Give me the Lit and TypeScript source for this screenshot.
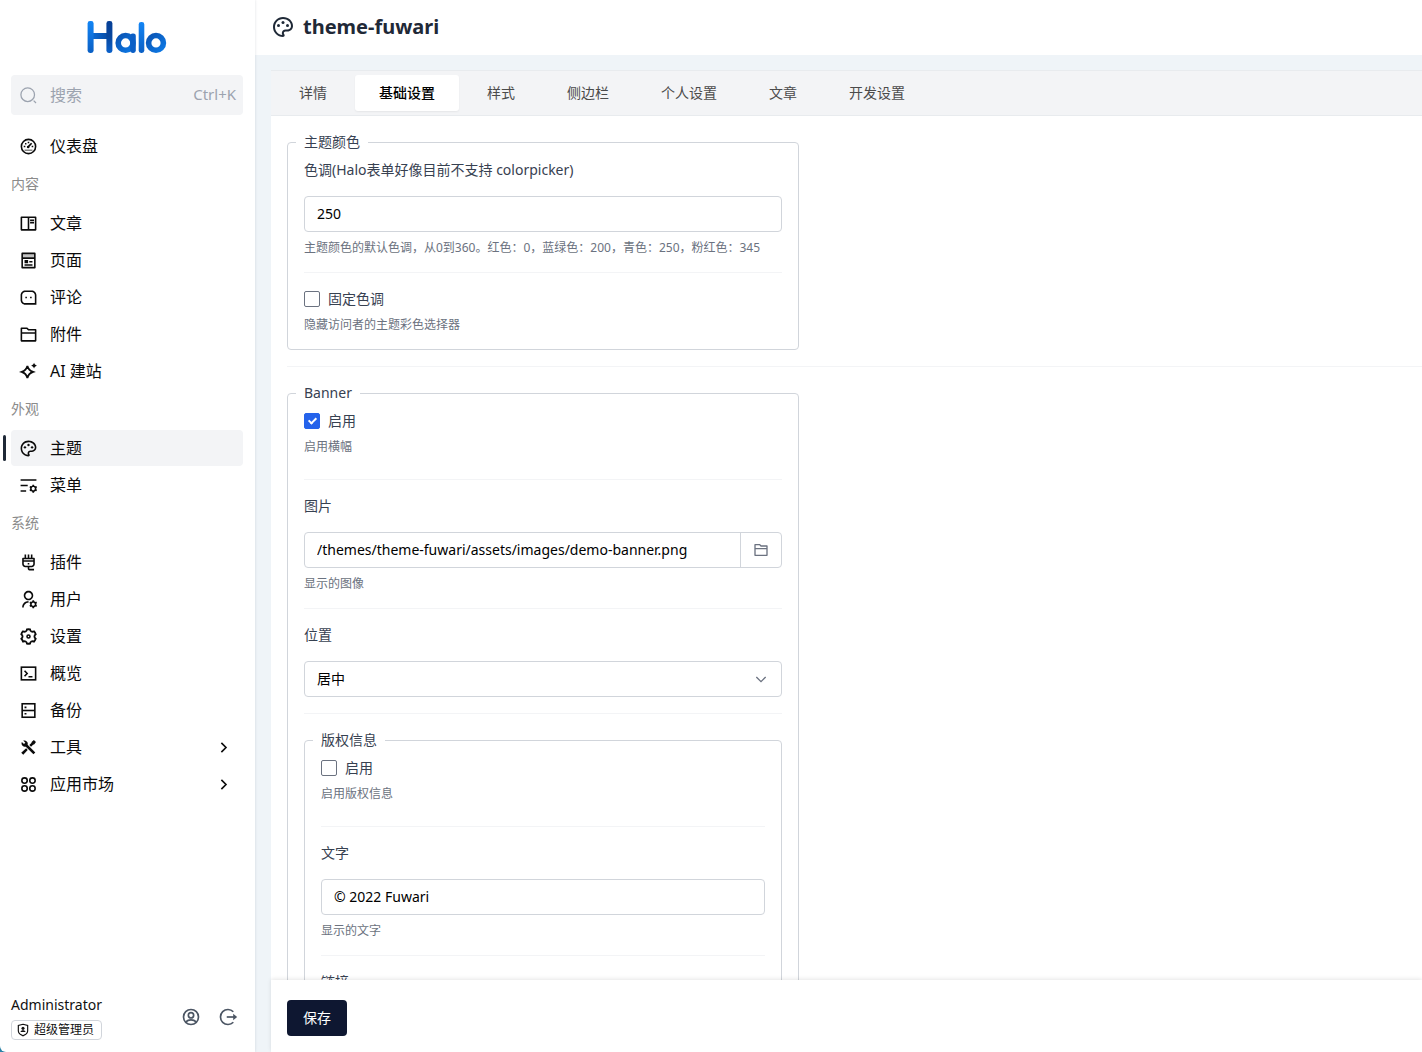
import { LitElement, html, css, svg, nothing } from "lit";
import { customElement, property } from "lit/decorators.js";
import { classMap } from "lit/directives/class-map.js";

const GEAR_SMALL =
  "M20.674 13.0251L21.8301 12.634L22.8301 14.366L21.914 15.1711C21.9704 15.4386 22 15.7158 22 16C22 16.2842 21.9704 16.5614 21.914 16.8289L22.8301 17.634L21.8301 19.366L20.674 18.9749C20.2635 19.3441 19.7763 19.6295 19.2391 19.8044L19 21H17L16.7609 19.8044C16.2237 19.6295 15.7365 19.3441 15.326 18.9749L14.1699 19.366L13.1699 17.634L14.086 16.8289C14.0296 16.5614 14 16.2842 14 16C14 15.7158 14.0296 15.4386 14.086 15.1711L13.1699 14.366L14.1699 12.634L15.326 13.0251C15.7365 12.6559 16.2237 12.3705 16.7609 12.1956L17 11H19L19.2391 12.1956C19.7763 12.3705 20.2635 12.6559 20.674 13.0251ZM18 18C19.1046 18 20 17.1046 20 16C20 14.8954 19.1046 14 18 14C16.8954 14 16 14.8954 16 16C16 17.1046 16.8954 18 18 18Z";

const ICONS: Record<string, unknown> = {
  search: svg`<circle cx="11" cy="11" r="8.6" class="line thin"/><path d="M18.5 18.5L21.5 21.5" class="line thin"/>`,
  dashboard: svg`<circle cx="12" cy="12" r="9" class="line"/><path d="M11.5 12.5L16 7.8" class="line"/><circle cx="11.6" cy="12.6" r="1.7"/><path d="M6 11h2v2H6zM16 11h2v2h-2zM11 6h2v2h-2zM7.6 7.6h1.8v1.8H7.6zM7 16h10v1H7z"/>`,
  posts: svg`<path d="M2 4C2 3.4 2.4 3 3 3H21C21.6 3 22 3.4 22 4V20C22 20.6 21.6 21 21 21H3C2.4 21 2 20.6 2 20V4ZM11 5H4V19H11V5ZM13 5V19H20V5H13ZM14 7H19V9H14V7ZM14 10H19V12H14V10Z"/>`,
  pages: svg`<path d="M20 22H4C3.4 22 3 21.6 3 21V3C3 2.4 3.4 2 4 2H20C20.6 2 21 2.4 21 3V21C21 21.6 20.6 22 20 22ZM19 8V4H5V8H19ZM19 10H5V20H19V10Z"/><path d="M5 4h14v4H5z" opacity=".25"/><path d="M7 11.5h4.5v4H7zM13 12.5h4v2h-4zM7 16.8h10v1.8H7z"/>`,
  comments: svg`<path d="M2 8.994C2 5.68286 4.67662 3 8 3H16C19.3137 3 22 5.68286 22 8.994V21H8C4.68629 21 2 18.3171 2 15.006V8.994ZM20 19V8.994C20 6.78543 18.2062 5 16 5H8C5.78458 5 4 6.78458 4 8.994V15.006C4 17.2146 5.79383 19 8 19H20ZM14 11H16V13H14V11ZM8 11H10V13H8V11Z"/>`,
  folder: svg`<path d="M12.4142 5H21C21.5523 5 22 5.44772 22 6V20C22 20.5523 21.5523 21 21 21H3C2.44772 21 2 20.5523 2 20V4C2 3.44772 2.44772 3 3 3H10.4142L12.4142 5ZM4 11V19H20V11H4ZM4 9H20V7H11.5858L9.58579 5H4V9Z"/>`,
  sparkle: svg`<path d="M10.6 5C11.6 9.3 13.2 11 17.8 12.6C13.2 14.2 11.6 16 10.6 20.4C9.6 16 8 14.2 3.4 12.6C8 11 9.6 9.3 10.6 5Z" class="line bold"/><path d="M19 1C19.7 3 20.4 3.8 22.6 4.6C20.4 5.4 19.7 6.2 19 8.2C18.3 6.2 17.6 5.4 15.4 4.6C17.6 3.8 18.3 3 19 1Z"/>`,
  palette: svg`<path d="M12 2C17.5222 2 22 5.97778 22 10.8889C22 13.9556 19.5111 16.4444 16.4444 16.4444H14.4778C13.5556 16.4444 12.8111 17.1889 12.8111 18.1111C12.8111 18.5333 12.9778 18.9222 13.2333 19.2111C13.5 19.5111 13.6667 19.9 13.6667 20.3333C13.6667 21.2556 12.9 22 12 22C6.47778 22 2 17.5222 2 12C2 6.47778 6.47778 2 12 2ZM10.8111 18.1111C10.8111 16.0843 12.451 14.4444 14.4778 14.4444H16.4444C18.4065 14.4444 20 12.851 20 10.8889C20 7.1392 16.4677 4 12 4C7.58235 4 4 7.58235 4 12C4 16.19 7.2226 19.6285 11.324 19.9718C10.9948 19.4168 10.8111 18.7761 10.8111 18.1111Z"/><circle cx="7.5" cy="10.5" r="1.5"/><circle cx="16.5" cy="10.5" r="1.5"/><circle cx="12" cy="7.5" r="1.5"/>`,
  menus: svg`<path d="M2 18H9V20H2V18ZM2 11H11V13H2V11ZM2 4H22V6H2V4Z"/><path d=${GEAR_SMALL}/>`,
  plug: svg`<path d="M13 18V20H19V22H13C11.8954 22 11 21.1046 11 20V18H8C5.79086 18 4 16.2091 4 14V7C4 6.44772 4.44772 6 5 6H7V2H9V6H11V2H13V6H15V2H17V6H19C19.5523 6 20 6.44772 20 7V14C20 16.2091 18.2091 18 16 18H13ZM8 16H16C17.1046 16 18 15.1046 18 14V11H6V14C6 15.1046 6.89543 16 8 16ZM18 8H6V9H18V8ZM11 12.5H13V14.5H11Z"/>`,
  user: svg`<path d="M12 14V16C8.68629 16 6 18.6863 6 22H4C4 17.5817 7.58172 14 12 14ZM12 13C8.685 13 6 10.315 6 7C6 3.685 8.685 1 12 1C15.315 1 18 3.685 18 7C18 10.315 15.315 13 12 13ZM12 11C14.21 11 16 9.21 16 7C16 4.79 14.21 3 12 3C9.79 3 8 4.79 8 7C8 9.21 9.79 11 12 11Z"/><path d=${GEAR_SMALL} transform="translate(0 2)"/>`,
  settings: svg`<path class="line bold" d="M4.3 16.6C4 16 3.1 15.5 2.9 14.9C3.9 14.2 4.5 13.2 4.5 12C4.5 10.8 3.9 9.8 2.9 9.1C3.4 7.7 4.1 6.5 5 5.6C6.1 6.1 7.3 6.2 8.4 5.6C9.5 5 10 4.1 10 3.1C11.4 2.8 12.6 2.8 14 3.1C14 4.1 14.5 5 15.6 5.6C16.7 6.2 17.9 6.1 19 5.6C19.9 6.5 20.6 7.7 21.1 9.1C20.1 9.8 19.5 10.8 19.5 12C19.5 13.2 20.1 14.2 21.1 14.9C20.6 16.3 19.9 17.5 19 18.4C17.9 17.9 16.7 17.8 15.6 18.4C14.5 19 14 19.9 14 20.9C12.6 21.2 11.4 21.2 10 20.9C10 19.9 9.5 19 8.4 18.4C7.3 17.8 6.1 17.9 5 18.4C4.7 18 4.5 17.2 4.3 16.6Z"/><circle cx="12" cy="12" r="1.9" class="line"/>`,
  terminal: svg`<rect x="3" y="4" width="18" height="16" class="line"/><path d="M7 8.5L10.3 12L7 15.5M12 16H17" class="line"/>`,
  server: svg`<rect x="4" y="3.5" width="16" height="17" class="line"/><path d="M4 12H20" class="line"/><path d="M7 7h2.4v2H7zM7 15h2.4v2H7z"/>`,
  tools: svg`<path d="M5.3 3.3L8 6L6.3 7.7L3.6 5C2.8 6.8 3.2 8.7 4.5 9.9C5.7 11.1 7.2 11.3 8.6 10.9L18.2 20.6L20.6 18.2L10.9 8.6C11.3 7.2 11.1 5.7 9.9 4.5C8.7 3.2 6.8 2.6 5.3 3.3Z"/><path d="M18.8 2.6L21.4 5.2L19.4 7.8L17.8 8.4L15.2 11L13 8.8L15.6 6.2L16.2 4.6ZM9 13L11 15L5.4 21.2L2.8 18.6Z"/>`,
  apps: svg`<circle cx="7" cy="7" r="3.4" class="line"/><circle cx="17" cy="7" r="3.4" class="line"/><circle cx="7" cy="17" r="3.4" class="line"/><circle cx="17" cy="17" r="3.4" class="line"/>`,
  right: svg`<path d="M9 5.5L15.5 12L9 18.5" class="line bold"/>`,
  down: svg`<path d="M5 9L12 16L19 9" class="line"/>`,
  account: svg`<circle cx="12" cy="12" r="9" class="line"/><circle cx="12" cy="10" r="3.2" class="line"/><path d="M5.8 17.8C9 14.6 15 14.6 18.2 17.8" class="line"/>`,
  logout: svg`<path d="M18.4 5.7A9 9 0 1 0 18.4 18.3" class="line"/><path d="M10.5 12H20" class="line"/><path d="M18.2 8.2L23 12L18.2 15.8Z"/>`,
  shield: svg`<path d="M12 2.2L20 4.2V13.5C20 16 18.8 17.8 16.8 19.1L12 22L7.2 19.1C5.2 17.8 4 16 4 13.5V4.2Z" class="line"/><circle cx="12" cy="9.2" r="2.6"/><path d="M7.6 15.6C8 13.4 9.8 12.6 12 12.6S16 13.4 16.4 15.6Z"/>`,
};

@customElement("ui-icon")
class UiIcon extends LitElement {
  @property() name = "";
  static styles = css`
    :host { display: inline-flex; flex: none; width: 20px; height: 20px; }
    svg { width: 100%; height: 100%; fill: currentColor; }
    .line { fill: none; stroke: currentColor; stroke-width: 2; }
    .thin { stroke-width: 1.6; }
    .bold { stroke-width: 2.3; }
  `;
  render() {
    return html`<svg viewBox="0 0 24 24" aria-hidden="true">${ICONS[this.name] ?? nothing}</svg>`;
  }
}

interface Item { icon: string; label: string; active?: boolean; more?: boolean }
const GROUPS: { title?: string; items: Item[] }[] = [
  { items: [{ icon: "dashboard", label: "仪表盘" }] },
  {
    title: "内容",
    items: [
      { icon: "posts", label: "文章" },
      { icon: "pages", label: "页面" },
      { icon: "comments", label: "评论" },
      { icon: "folder", label: "附件" },
      { icon: "sparkle", label: "AI 建站" },
    ],
  },
  {
    title: "外观",
    items: [
      { icon: "palette", label: "主题", active: true },
      { icon: "menus", label: "菜单" },
    ],
  },
  {
    title: "系统",
    items: [
      { icon: "plug", label: "插件" },
      { icon: "user", label: "用户" },
      { icon: "settings", label: "设置" },
      { icon: "terminal", label: "概览" },
      { icon: "server", label: "备份" },
      { icon: "tools", label: "工具", more: true },
      { icon: "apps", label: "应用市场", more: true },
    ],
  },
];
const TABS = ["详情", "基础设置", "样式", "侧边栏", "个人设置", "文章", "开发设置"];

@customElement("app-sidebar")
class AppSidebar extends LitElement {
  static styles = css`
    :host { display: flex; flex-direction: column; box-sizing: border-box; width: 255px; flex: none;
      background: #fff; border-bottom-left-radius: 6px; box-shadow: 0 0 3px rgba(15, 30, 60, .14); z-index: 1; }
    .brand { display: flex; justify-content: center; padding: 20px 1px 20px 0; }
    .brand svg { display: block; width: 80px; height: 35px; }
    .search { display: flex; align-items: center; gap: 12px; height: 40px; margin: 0 12px 13px 11px; padding: 0 7px 0 8px;
      border: 0; border-radius: 4px; background: #f3f4f6; color: #9ca3af; font: inherit; font-size: 16px; text-align: left; }
    .search ui-icon, li ui-icon { width: 19px; height: 19px; }
    .search span { flex: 1; padding-bottom: 2px; }
    .search kbd { padding-bottom: 2px; font: inherit; font-size: 15px; }
    nav { flex: 1; }
    h2 { margin: 10px 11px 11px; font-size: 14px; line-height: 20px; font-weight: 400; color: #8b8b8b; }
    ul { list-style: none; margin: 0; padding: 0 12px 0 11px; display: flex; flex-direction: column; gap: 1px; }
    li { position: relative; }
    a { display: flex; align-items: center; gap: 12px; height: 36px; padding: 0 11px 0 8px; border-radius: 4px;
      color: #0b0b0b; font-size: 16px; text-decoration: none; }
    a span { flex: 1; padding-bottom: 2px; }
    li .more { width: 17px; height: 17px; }
    .active a { background: #f3f4f6; }
    .active::before { content: ""; position: absolute; left: -8px; top: 5px; width: 3px; height: 26px; border-radius: 2px; background: #1f2937; }
    .user { display: flex; align-items: center; justify-content: space-between; padding: 0 17px 12px 11px; }
    .name { font-size: 14px; line-height: 20px; color: #111; }
    .role { display: flex; align-items: center; gap: 4px; box-sizing: border-box; height: 20px; margin-top: 5px; padding: 0 7px 0 4px;
      border: 1px solid #d1d5db; border-radius: 4px; font-size: 12px; line-height: 16px; color: #111; }
    .role ui-icon { width: 14px; height: 14px; }
    .actions { display: flex; gap: 17px; padding-bottom: 2px; }
    .actions button { display: flex; padding: 0; border: 0; background: none; color: #4b5563; }
  `;
  render() {
    return html`
      <div class="brand">
        <svg viewBox="87 20 80 35" role="img" aria-label="Halo">
          <defs>
            <linearGradient id="l" x1="0" y1="0" x2="0" y2="1"><stop offset="0" stop-color="#1385f5"/><stop offset="1" stop-color="#0a5fc4"/></linearGradient>
            <linearGradient id="r" x1="0" y1="0" x2="0" y2="1"><stop offset="0" stop-color="#063f96"/><stop offset=".5" stop-color="#07479f"/><stop offset="1" stop-color="#0b62cb"/></linearGradient>
            <linearGradient id="b" x1="0" y1="0" x2="1" y2="0"><stop offset="0" stop-color="#0c6fdb"/><stop offset="1" stop-color="#07479f"/></linearGradient>
            <linearGradient id="o" x1="0" y1="0" x2="1" y2="1"><stop offset="0" stop-color="#0a55b5"/><stop offset="1" stop-color="#0d78e4"/></linearGradient>
          </defs>
          <rect x="90" y="33" width="20" height="6" fill="url(#b)"/>
          <rect x="87.6" y="21" width="6" height="32" rx="2.4" fill="url(#l)"/>
          <rect x="106.4" y="21" width="6" height="32" rx="2.4" fill="url(#r)"/>
          <circle cx="125.6" cy="42.9" r="7.4" fill="none" stroke="url(#o)" stroke-width="5.6"/>
          <rect x="130.2" y="33.4" width="5.6" height="19.6" rx="2.4" fill="#0b5fc6"/>
          <rect x="138.7" y="22" width="5.6" height="31" rx="2.4" fill="url(#l)"/>
          <circle cx="156" cy="42.9" r="7.4" fill="none" stroke="url(#o)" stroke-width="5.6"/>
        </svg>
      </div>
      <button class="search" type="button"><ui-icon name="search"></ui-icon><span>搜索</span><kbd>Ctrl+K</kbd></button>
      <nav>
        ${GROUPS.map((g) => html`
          ${g.title ? html`<h2>${g.title}</h2>` : nothing}
          <ul>
            ${g.items.map((i) => html`
              <li class=${classMap({ active: !!i.active })}>
                <a href="#"><ui-icon name=${i.icon}></ui-icon><span>${i.label}</span>
                  ${i.more ? html`<ui-icon class="more" name="right"></ui-icon>` : nothing}</a>
              </li>`)}
          </ul>`)}
      </nav>
      <div class="user">
        <div>
          <div class="name">Administrator</div>
          <div class="role"><ui-icon name="shield"></ui-icon>超级管理员</div>
        </div>
        <div class="actions">
          <button type="button" aria-label="个人中心"><ui-icon name="account"></ui-icon></button>
          <button type="button" aria-label="退出登录"><ui-icon name="logout"></ui-icon></button>
        </div>
      </div>`;
  }
}

@customElement("settings-form")
class SettingsForm extends LitElement {
  static styles = css`
    :host { display: block; padding: 16px 0 16px 16px; font-size: 14px; line-height: 20px; color: #374151; }
    .section + .section { margin-top: 16px; padding-top: 16px; border-top: 1px solid #f3f4f6; }
    fieldset { box-sizing: border-box; min-width: 0; max-width: 512px; margin: 0; padding: 8px 16px 0; border: 1px solid #d1d5db; border-radius: 4px; }
    legend { margin-left: -8px; padding: 0 8px; height: 20px; }
    .field { padding: 16px 0; border-bottom: 1px solid #f3f4f6; }
    .field:first-of-type { padding-top: 0; }
    .field:last-of-type { border-bottom: 0; }
    .field.roomy { padding-bottom: 24px; }
    .field > label { display: block; }
    .field > .check { display: flex; align-items: center; gap: 8px; }
    .box { display: flex; box-sizing: border-box; height: 36px; margin-top: 16px; border: 1px solid #d1d5db; border-radius: 4px; background: #fff; overflow: hidden; }
    .box input, .box select { flex: 1; min-width: 0; box-sizing: border-box; height: 100%; margin: 0; padding: 0 12px; border: 0; outline: 0;
      background: transparent; color: #000; font: inherit; appearance: none; }
    .box input { padding-bottom: 2px; }
    .box button { display: flex; align-items: center; justify-content: center; width: 41px; padding: 0; border: 0; border-left: 1px solid #d1d5db; background: none; color: #6b7280; }
    .box ui-icon { width: 16px; height: 16px; }
    .pick { display: grid; align-items: center; }
    .pick > * { grid-area: 1 / 1; }
    .pick ui-icon { justify-self: end; margin-right: 12px; color: #6b7280; pointer-events: none; }
    .help { margin: 8px 0 0; font-size: 12px; line-height: 16px; color: #6b7280; }
    .check input { appearance: none; display: grid; place-items: center; box-sizing: border-box; width: 16px; height: 16px; margin: 0;
      border: 1px solid #6b7280; border-radius: 2px; background: #fff; }
    .check input:checked { border-color: #2563eb; background: #2563eb; }
    .check input:checked::before { content: ""; width: 3px; height: 6px; margin-bottom: 2px; border: solid #fff; border-width: 0 2px 2px 0; transform: rotate(45deg); }
  `;
  render() {
    return html`
      <div class="section">
        <fieldset>
          <legend>主题颜色</legend>
          <div class="field">
            <label for="hue">色调(Halo表单好像目前不支持 colorpicker)</label>
            <div class="box"><input id="hue" type="text" value="250"></div>
            <p class="help">主题颜色的默认色调，从0到360。红色：0，蓝绿色：200，青色：250，粉红色：345</p>
          </div>
          <div class="field">
            <label class="check"><input type="checkbox">固定色调</label>
            <p class="help">隐藏访问者的主题彩色选择器</p>
          </div>
        </fieldset>
      </div>
      <div class="section">
        <fieldset>
          <legend>Banner</legend>
          <div class="field roomy">
            <label class="check"><input type="checkbox" checked>启用</label>
            <p class="help">启用横幅</p>
          </div>
          <div class="field">
            <label for="image">图片</label>
            <div class="box">
              <input id="image" type="text" value="/themes/theme-fuwari/assets/images/demo-banner.png">
              <button type="button" aria-label="选择附件"><ui-icon name="folder"></ui-icon></button>
            </div>
            <p class="help">显示的图像</p>
          </div>
          <div class="field">
            <label for="position">位置</label>
            <div class="box pick">
              <select id="position"><option>居中</option></select>
              <ui-icon name="down"></ui-icon>
            </div>
          </div>
          <div class="field">
            <fieldset>
              <legend>版权信息</legend>
              <div class="field roomy">
                <label class="check"><input type="checkbox">启用</label>
                <p class="help">启用版权信息</p>
              </div>
              <div class="field">
                <label for="credit">文字</label>
                <div class="box"><input id="credit" type="text" value="© 2022 Fuwari"></div>
                <p class="help">显示的文字</p>
              </div>
              <div class="field">
                <label for="link">链接</label>
                <div class="box"><input id="link" type="text"></div>
              </div>
            </fieldset>
          </div>
        </fieldset>
      </div>`;
  }
}

@customElement("app-root")
class AppRoot extends LitElement {
  static styles = css`
    :host { display: flex; height: 100vh; overflow: hidden; background: #2b86ab;
      font-family: "Noto Sans", "Noto Sans CJK SC", sans-serif; }
    main { flex: 1; min-width: 0; display: flex; flex-direction: column; background: #eff4f8; }
    header { display: flex; align-items: center; gap: 8px; box-sizing: border-box; height: 55px; flex: none; padding: 0 16px 2px; background: #fff; color: #1f2937; }
    header ui-icon { width: 24px; height: 24px; }
    h1 { margin: 0; font-size: 20px; line-height: 28px; font-weight: 700; }
    .card { flex: 1; min-height: 0; display: flex; flex-direction: column; margin: 15px 0 0 16px; background: #fff; }
    .tabs { display: flex; gap: 4px; flex: none; padding: 4px; border: solid #e8ebee; border-width: 1px 0; background: #f3f4f6; }
    .tabs button { height: 36px; padding: 0 24px 2px; border: 0; border-radius: 3px; background: none; color: #4b4b4b; font: inherit; font-size: 14px; }
    .tabs .on { background: #fff; color: #000; font-weight: 500; box-shadow: 0 1px 2px rgba(0, 0, 0, .06); }
    .scroll { flex: 1; min-height: 0; overflow: hidden; }
    footer { flex: none; display: flex; padding: 20px 16px 16px; background: #fff; box-shadow: 0 -1px 4px rgba(0, 0, 0, .1); z-index: 1; }
    .save { height: 36px; padding: 0 16px 2px; border: 0; border-radius: 4px; background: #0e1731; color: #fff; font: inherit; font-size: 14px; }
  `;
  render() {
    return html`
      <app-sidebar></app-sidebar>
      <main>
        <header><ui-icon name="palette"></ui-icon><h1>theme-fuwari</h1></header>
        <div class="card">
          <div class="tabs" role="tablist">
            ${TABS.map((t, i) => html`<button type="button" role="tab" aria-selected=${i === 1} class=${classMap({ on: i === 1 })}>${t}</button>`)}
          </div>
          <div class="scroll"><settings-form></settings-form></div>
          <footer><button class="save" type="button">保存</button></footer>
        </div>
      </main>`;
  }
}
